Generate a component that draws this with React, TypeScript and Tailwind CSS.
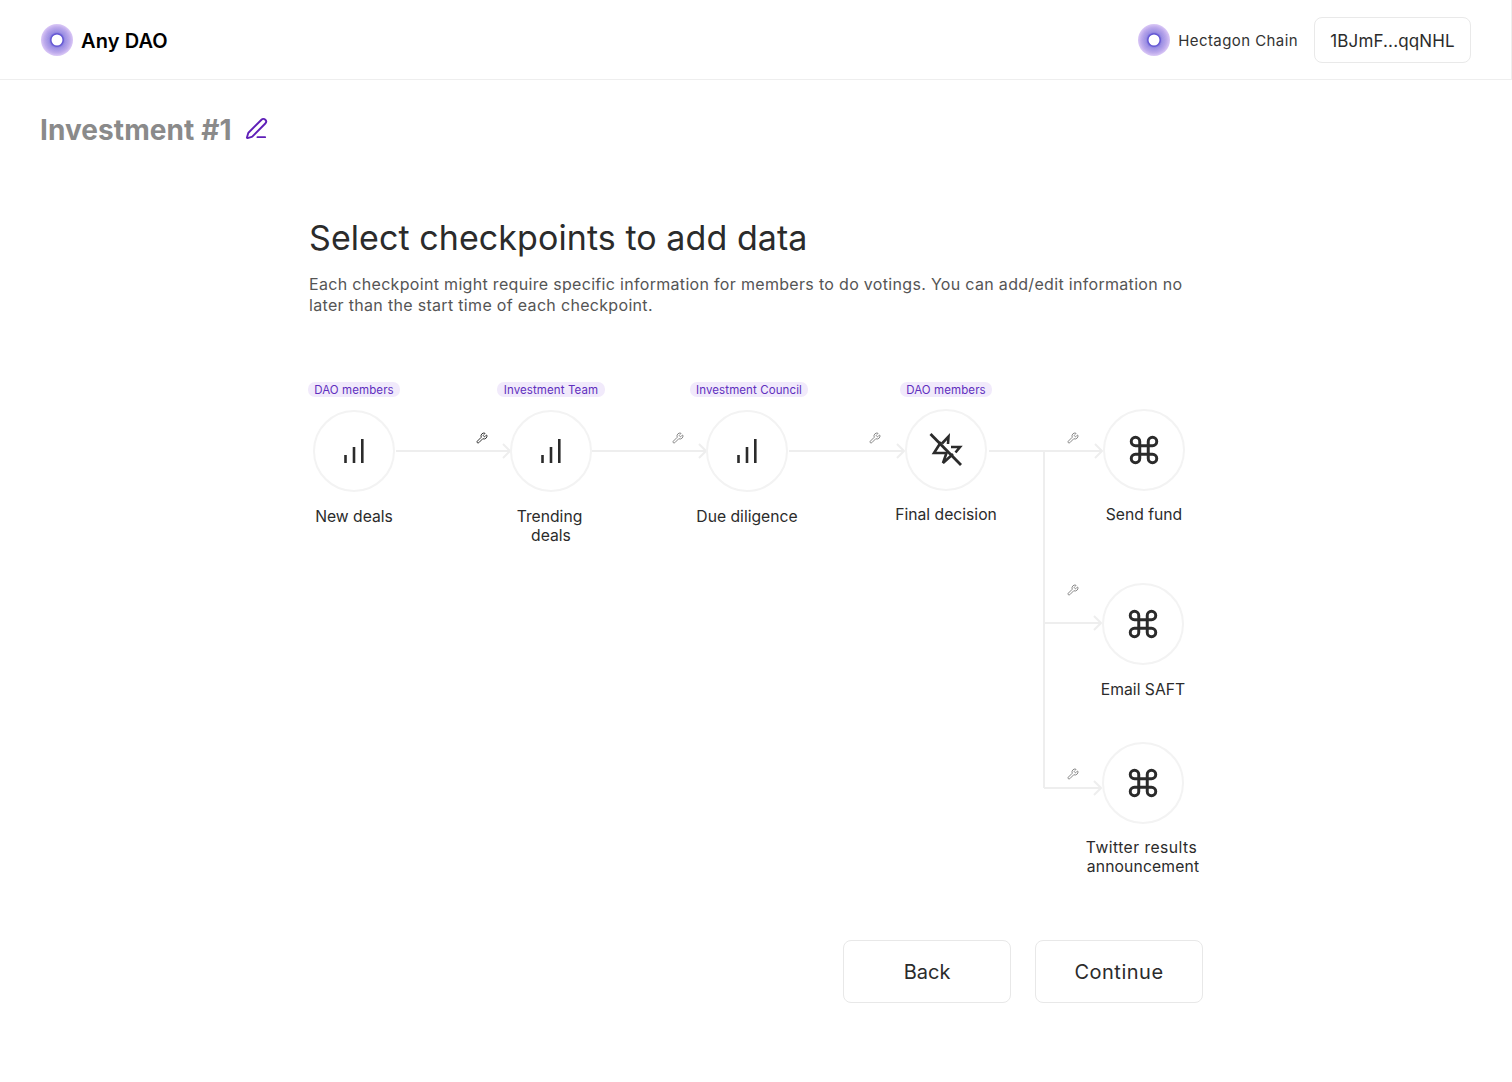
import { Command, PenLine, Wrench } from "lucide-react";

const Logo = ({ id }: { id: string }) => {
  const rays = Array.from({ length: 90 }, (_, i) => (i * Math.PI * 2) / 90);
  return (
    <svg width="32" height="32" viewBox="0 0 32 32">
      <defs>
        <radialGradient id={id} cx="50%" cy="50%" r="50%">
          <stop offset="0.34" stop-color="#5347cf" />
          <stop offset="0.52" stop-color="#8f80e0" />
          <stop offset="0.8" stop-color="#b7a2ea" />
          <stop offset="1" stop-color="#d8c4f6" />
        </radialGradient>
      </defs>
      <circle cx="16" cy="16" r="16" fill={`url(#${id})`} />
      {rays.map((a) => (
        <line
          key={a}
          x1={16 + 7 * Math.cos(a)}
          y1={16 + 7 * Math.sin(a)}
          x2={16 + 16 * Math.cos(a)}
          y2={16 + 16 * Math.sin(a)}
          stroke="#ffffff"
          strokeOpacity="0.25"
          strokeWidth="0.4"
        />
      ))}
      <circle cx="16" cy="16" r="5.5" fill="#ffffff" />
    </svg>
  );
};

const Bars = () => (
  <svg width="22" height="26" viewBox="0 0 22 26" fill="none" stroke="#2b2b2b" strokeWidth="2.6">
    <path d="M2.500 25v-8" />
    <path d="M11 25V9" />
    <path d="M19.300 25V1" />
  </svg>
);

const ZapSlash = () => (
  <svg width="36" height="36" viewBox="0 0 36 36" fill="none" stroke="#2b2b2b" strokeWidth="2.6">
    <path d="M2.500 2 33 33" strokeWidth="2.8" />
    <path d="M14 11.500 20.500 4.500 20 12" />
    <path d="M23 15H32L27.500 20.500" />
    <path d="M13 10 6 21H18.500L15 31 25 22" />
  </svg>
);

const Tag = ({ children, className }: { children: string; className?: string }) => (
  <span
    className={`absolute top-[-28px] h-[15px] whitespace-nowrap rounded-[7px] bg-[#f1eafb] px-[6.500px] text-[11.5px] leading-[17px] tracking-[0.1px] text-[#5f2fbe] ${className}`}
  >
    {children}
  </span>
);

const Node = ({
  label,
  icon,
  tag,
  className,
  labelClass = "mt-[15px]",
}: {
  label: React.ReactNode;
  icon: React.ReactNode;
  tag?: React.ReactNode;
  className: string;
  labelClass?: string;
}) => (
  <div className={`absolute flex w-[160px] flex-col items-center ${className}`}>
    {tag}
    <div className="flex h-[82px] w-[82px] items-center justify-center rounded-full border-2 border-[#f3f3f3] bg-white">
      {icon}
    </div>
    <p className={`text-center text-[15.7px] leading-[19px] text-[#2b2b2b] ${labelClass}`}>{label}</p>
  </div>
);

const Arrow = ({ x1, x2, y }: { x1: number; x2: number; y: number }) => (
  <path d={`M${x1} ${y}H${x2}M${x2 - 7} ${y - 7}L${x2} ${y}L${x2 - 7} ${y + 7}`} />
);

const Spanner = ({ className }: { className: string }) => (
  <Wrench size={12} strokeWidth={2} className={`absolute ${className}`} />
);

export default function App() {
  return (
    <div className="min-h-[1082px] bg-white font-['Inter',sans-serif] text-[#2b2b2b]">
      <header className="flex h-[80px] items-center justify-between border-b border-r border-[#eeeeee] pl-[41px] pr-[40px]">
        <div className="flex items-center gap-[8px]">
          <Logo id="logo-a" />
          <span className="pt-[3px] text-[20px] font-semibold tracking-[0.1px] text-black">Any DAO</span>
        </div>
        <div className="flex items-center gap-[16px]">
          <div className="flex items-center gap-[8px]">
            <Logo id="logo-b" />
            <span className="pt-[3px] text-[15px] tracking-[0.42px] text-[#333333]">Hectagon Chain</span>
          </div>
          <button className="flex h-[46px] w-[157px] items-center justify-center rounded-[8px] border border-[#e9e9e9] pt-[5px] text-[17px] tracking-[0.15px] text-[#2b2b2b]">
            1BJmF...qqNHL
          </button>
        </div>
      </header>

      <div className="flex items-center gap-[13px] pl-[40px] pt-[33px]">
        <h1 className="text-[28px] font-bold leading-[34px] tracking-[0.08px] text-[#8a8a8a]">Investment #1</h1>
        <PenLine size={23} className="mt-[-3px] text-[#5f1fb8]" strokeWidth={2} />
      </div>

      <main className="ml-[309px] mt-[68px] w-[894px]">
        <h2 className="text-[34px] font-normal leading-[46px] tracking-[0.07px] text-[#2b2b2b]">
          Select checkpoints to add data
        </h2>
        <p className="mt-[13px] w-[885px] text-[16px] leading-[21px] tracking-[0.315px] text-[#555555]">
          Each checkpoint might require specific information for members to do votings. You can add/edit information no later than the start time of each checkpoint.
        </p>

        <div className="relative mt-[64px] h-[560px]">
          <svg
            className="absolute left-0 top-0"
            width="900"
            height="430"
            viewBox="0 0 900 430"
            fill="none"
            stroke="#eeeeee"
            strokeWidth="2"
          >
            <Arrow x1={87} x2={201} y={71} />
            <Arrow x1={283} x2={397} y={71} />
            <Arrow x1={480} x2={595} y={71} />
            <Arrow x1={680} x2={793} y={71} />
            <path d="M735 71V408" />
            <Arrow x1={735} x2={792} y={243} />
            <Arrow x1={735} x2={792} y={408} />
          </svg>

          <Spanner className="left-[167px] top-[52px] text-[#333333]" />
          <Spanner className="left-[363px] top-[52px] text-[#888888]" />
          <Spanner className="left-[560px] top-[52px] text-[#888888]" />
          <Spanner className="left-[758px] top-[52px] text-[#888888]" />
          <Spanner className="left-[758px] top-[204px] text-[#888888]" />
          <Spanner className="left-[758px] top-[388px] text-[#888888]" />

          <Node
            className="left-[-35px] top-[30px]"
            label="New deals"
            icon={<Bars />}
            tag={<Tag>DAO members</Tag>}
          />
          <Node
            className="left-[162px] top-[30px]"
            label={<><span className="mr-[3px] inline-block">Trending</span><br />deals</>}
            icon={<Bars />}
            tag={<Tag>Investment Team</Tag>}
          />
          <Node
            className="left-[358px] top-[30px]"
            label="Due diligence"
            icon={<Bars />}
            tag={<Tag className="ml-[4px]">Investment Council</Tag>}
          />
          <Node
            className="left-[557px] top-[29px]"
            label="Final decision"
            labelClass="mt-[14px]"
            icon={<ZapSlash />}
            tag={<Tag className="mt-[1px]">DAO members</Tag>}
          />
          <Node
            className="left-[755px] top-[29px]"
            label="Send fund"
            labelClass="mt-[14px]"
            icon={<Command size={34} strokeWidth={2.1} />}
          />
          <Node
            className="left-[754px] top-[203px]"
            label="Email SAFT"
            icon={<Command size={34} strokeWidth={2.1} />}
          />
          <Node
            className="left-[754px] top-[362px]"
            label={<><span className="mr-[3px] inline-block tracking-[0.45px]">Twitter results</span><br /><span className="tracking-[0.15px]">announcement</span></>}
            labelClass="mt-[14px]"
            icon={<Command size={34} strokeWidth={2.1} />}
          />
        </div>

        <div className="flex justify-end gap-[24px]">
          <button className="h-[63px] w-[168px] rounded-[8px] border border-[#e8e8e8] text-[20px] text-[#2b2b2b]">
            Back
          </button>
          <button className="h-[63px] w-[168px] rounded-[8px] border border-[#e8e8e8] text-[20px] tracking-[0.5px] text-[#2b2b2b]">
            Continue
          </button>
        </div>
      </main>
    </div>
  );
}
